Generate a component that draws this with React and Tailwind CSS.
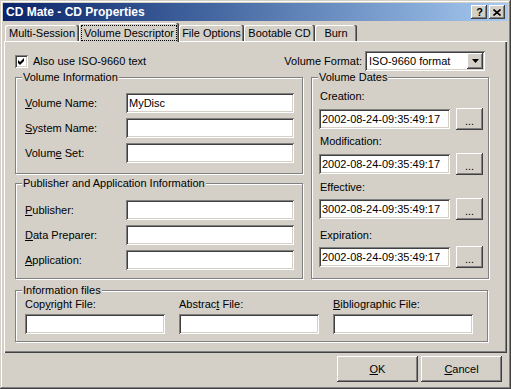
import React from "react";

const RAISED =
  "shadow-[inset_-1px_-1px_0_#404040,inset_1px_1px_0_#ffffff,inset_-2px_-2px_0_#808080,inset_2px_2px_0_#d4d0c8]";
const SUNKEN =
  "shadow-[inset_1px_1px_0_#808080,inset_-1px_-1px_0_#ffffff,inset_2px_2px_0_#404040,inset_-2px_-2px_0_#d4d0c8]";

function Field({ className = "", value = "" }) {
  return (
    <div className={`h-[20px] bg-white ${SUNKEN} flex items-center pl-[3px] whitespace-nowrap ${className}`}>
      {value}
    </div>
  );
}

function Group({ title, className = "", children }) {
  return (
    <div
      className={`relative border border-[#808080] shadow-[inset_1px_1px_0_#ffffff,1px_1px_0_#ffffff] ${className}`}
    >
      <span className="absolute top-[-7px] left-[6px] bg-[#d4d0c8] px-px leading-[13px] whitespace-nowrap">
        {title}
      </span>
      {children}
    </div>
  );
}

function Row({ label, value }) {
  return (
    <div className="flex items-center h-[20px]">
      <div className="w-[101px] whitespace-nowrap">{label}</div>
      <Field className="w-[168px]" value={value} />
    </div>
  );
}

function DateField({ label, value, labelMt, rowMt }) {
  return (
    <>
      <div className={`leading-[13px] pl-px ${labelMt}`}>{label}</div>
      <div className={`flex items-center gap-[6px] h-[22px] ${rowMt}`}>
        <Field className="w-[131px]" value={value} />
        <div className={`w-[27px] h-[22px] bg-[#d4d0c8] ${RAISED} flex items-end justify-center pb-[5px] leading-[8px]`}>
          ...
        </div>
      </div>
    </>
  );
}

function Tab({ className = "", children }) {
  return (
    <div
      className={`h-[16px] bg-[#d4d0c8] rounded-t-[2px] flex items-center justify-center whitespace-nowrap shadow-[inset_-1px_0_0_#404040,inset_-2px_0_0_#808080,inset_1px_1px_0_#ffffff] ${className}`}
    >
      {children}
    </div>
  );
}

export default function App() {
  return (
    <div className="w-[511px] h-[389px] bg-[#d4d0c8] p-[3px] flex flex-col text-[11px] leading-[13px] text-black font-['Liberation_Sans',Arial,sans-serif] shadow-[inset_-1px_-1px_0_#404040,inset_1px_1px_0_#d4d0c8,inset_-2px_-2px_0_#808080,inset_2px_2px_0_#ffffff] overflow-hidden select-none">
      {/* Title bar */}
      <div className="h-[18px] shrink-0 flex items-center justify-between bg-linear-to-r from-[#0a246a] to-[#a6caf0] pl-[3px] pr-[3px]">
        <span className="text-white font-bold text-[12px] leading-[14px] whitespace-nowrap">CD Mate - CD Properties</span>
        <div className="flex gap-[2px]">
          <div className={`w-[16px] h-[14px] bg-[#d4d0c8] ${RAISED} flex items-center justify-center font-bold text-[11px] leading-[11px] pl-px`}>
            ?
          </div>
          <div className={`w-[16px] h-[14px] bg-[#d4d0c8] ${RAISED} flex items-center justify-center`}>
            <svg width="8" height="7" viewBox="0 0 8 7" className="block">
              <path d="M0.5 0.5 L7.5 6.5 M7.5 0.5 L0.5 6.5" stroke="#000" strokeWidth="1.6" fill="none" />
            </svg>
          </div>
        </div>
      </div>

      {/* Tabs */}
      <div className="h-[20px] shrink-0 flex items-end pl-[2px]">
        <Tab className="w-[74px]">Multi-Session</Tab>
        <div className="relative z-10 w-[100px] h-[19px] -mb-px bg-[#d4d0c8] rounded-t-[2px] flex justify-center pt-[2px] shadow-[inset_-1px_0_0_#404040,inset_-2px_0_0_#808080,inset_1px_1px_0_#ffffff]">
          <span className="h-[16px] leading-[14px] border border-dotted border-black px-[2px] whitespace-nowrap">
            Volume Descriptor
          </span>
        </div>
        <Tab className="w-[65px]">File Options</Tab>
        <Tab className="w-[71px]">Bootable CD</Tab>
        <Tab className="w-[42px]">Burn</Tab>
      </div>

      {/* Panel */}
      <div className="ml-px w-[503px] h-[312px] shrink-0 pt-[10px] pl-[11px] shadow-[inset_1px_1px_0_#ffffff,inset_-1px_-1px_0_#404040,inset_-2px_-2px_0_#808080]">
        {/* Row 1 */}
        <div className="w-[470px] h-[20px] flex items-center justify-between">
          <div className="flex items-center gap-[5px]">
            <div className={`w-[13px] h-[13px] bg-white ${SUNKEN} flex items-center justify-center`}>
              <svg width="13" height="13" viewBox="0 0 13 13" className="block">
                <polygon points="3,5 5,7 9,3 9,6 5,10 3,8" fill="#000" />
              </svg>
            </div>
            <span className="whitespace-nowrap">Also use ISO-9660 text</span>
          </div>
          <div className="flex items-center gap-[3px]">
            <span className="whitespace-nowrap">Volume Format:</span>
            <div className={`w-[120px] h-[20px] bg-white ${SUNKEN} p-[2px] flex items-center`}>
              <span className="flex-1 pl-[2px] whitespace-nowrap">ISO-9660 format</span>
              <div className={`w-[16px] h-[16px] bg-[#d4d0c8] ${RAISED} flex items-center justify-center`}>
                <svg width="7" height="4" viewBox="0 0 7 4" className="block">
                  <polygon points="0,0 7,0 3.5,4" fill="#000" />
                </svg>
              </div>
            </div>
          </div>
        </div>

        {/* Groups */}
        <div className="mt-[6px] flex items-start gap-[8px]">
          <div className="w-[288px] flex flex-col gap-[9px]">
            <Group title="Volume Information" className="w-[288px] h-[97px] pt-[15px] pl-[9px] flex flex-col gap-[5px]">
              <Row label={<><span className="underline">V</span>olume Name:</>} value="MyDisc" />
              <Row label={<><span className="underline">S</span>ystem Name:</>} value="" />
              <Row label={<>Volum<span className="underline">e</span> Set:</>} value="" />
            </Group>
            <Group
              title="Publisher and Application Information"
              className="w-[288px] h-[96px] pt-[16px] pl-[9px] flex flex-col gap-[5px]"
            >
              <Row label={<><span className="underline">P</span>ublisher:</>} value="" />
              <Row label={<><span className="underline">D</span>ata Preparer:</>} value="" />
              <Row label={<><span className="underline">A</span>pplication:</>} value="" />
            </Group>
          </div>
          <Group title="Volume Dates" className="w-[178px] h-[202px] pt-[12px] pl-[7px] flex flex-col">
            <DateField label="Creation:" value="2002-08-24-09:35:49:17" labelMt="mt-0" rowMt="mt-[5px]" />
            <DateField label="Modification:" value="2002-08-24-09:35:49:17" labelMt="mt-[5px]" rowMt="mt-[5px]" />
            <DateField label="Effective:" value="3002-08-24-09:35:49:17" labelMt="mt-[6px]" rowMt="mt-[4px]" />
            <DateField label="Expiration:" value="2002-08-24-09:35:49:17" labelMt="mt-[9px]" rowMt="mt-[4px]" />
          </Group>
        </div>

        {/* Information files */}
        <Group title="Information files" className="mt-[11px] w-[473px] h-[52px] pt-[7px] pl-[9px] flex gap-[14px]">
          <div className="w-[140px] flex flex-col">
            <div className="leading-[13px] whitespace-nowrap">
              Cop<span className="underline">y</span>right File:
            </div>
            <Field className="mt-[3px] w-[140px]" />
          </div>
          <div className="w-[140px] flex flex-col">
            <div className="leading-[13px] whitespace-nowrap">
              Abstrac<span className="underline">t</span> File:
            </div>
            <Field className="mt-[3px] w-[140px]" />
          </div>
          <div className="w-[140px] flex flex-col">
            <div className="leading-[13px] whitespace-nowrap">
              <span className="underline">B</span>ibliographic File:
            </div>
            <Field className="mt-[3px] w-[140px]" />
          </div>
        </Group>
      </div>

      {/* Buttons */}
      <div className="mt-[3px] flex justify-end gap-[3px] pr-[6px]">
        <div className={`w-[81px] h-[26px] bg-[#d4d0c8] ${RAISED} flex items-center justify-center`}>
          <span>
            <span className="underline">O</span>K
          </span>
        </div>
        <div className={`w-[81px] h-[26px] bg-[#d4d0c8] ${RAISED} flex items-center justify-center`}>
          <span>
            <span className="underline">C</span>ancel
          </span>
        </div>
      </div>
    </div>
  );
}
